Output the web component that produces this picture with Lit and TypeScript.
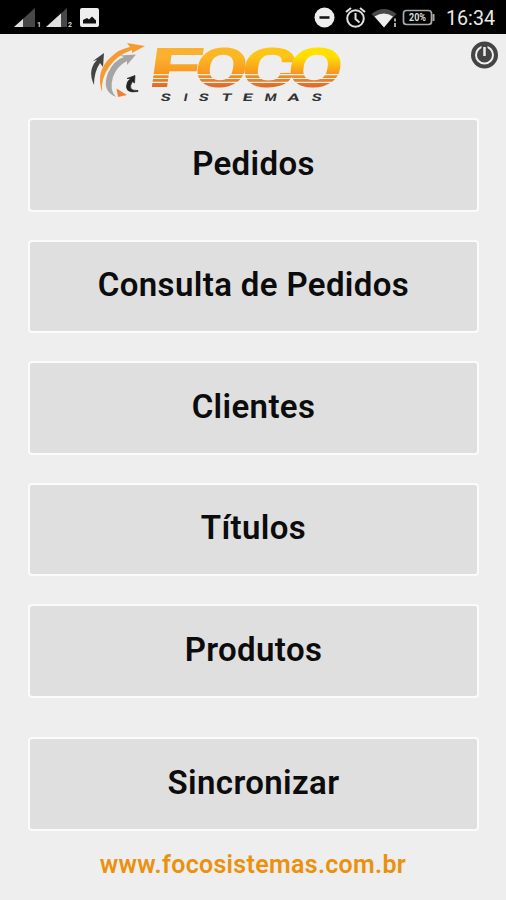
import { LitElement, html, css, svg } from "lit";
import { customElement, property } from "lit/decorators.js";

@customElement("status-bar")
class StatusBar extends LitElement {
  static styles = css`
    :host { display: block; background: #000; height: 34px; }
    svg { display: block; }
    .clock { font: 20px Roboto, sans-serif; fill: #e8e8e8; }
    .pct { font: bold 10px Roboto, sans-serif; fill: #ddd; }
    .sim { font: bold 7px Roboto, sans-serif; fill: #ddd; }
  `;
  render() {
    return html`<svg width="506" height="34" viewBox="0 0 506 34">
      <path d="M14 27L35 8V27Z" fill="#484848" /><path d="M14 27L23 19V27Z" fill="#e0e0e0" />
      <text class="sim" x="37" y="27">1</text>
      <path d="M46 27L67 8V27Z" fill="#484848" /><path d="M46 27L61 13.5V27Z" fill="#e0e0e0" />
      <text class="sim" x="68" y="27">2</text>
      <rect x="80" y="8" width="19" height="19" rx="2" fill="#eee" />
      <path d="M83 23.500V20l4-2 2 1.500 3-3 4 4v3z" fill="#111" />
      <circle cx="324.500" cy="17.500" r="10" fill="#eee" /><path d="M319.500 17.500h10" stroke="#111" stroke-width="2.500" />
      <g fill="none" stroke="#e0e0e0" stroke-width="2">
        <circle cx="355.500" cy="18.500" r="8.300" /><path d="M355.500 13v6l4 3.500M346 12l5-4M365 12l-5-4" />
        <rect x="403.500" y="10.500" width="28" height="14" rx="3" stroke="#aaa" stroke-width="1.700" />
      </g>
      <path d="M371.500 14Q384 4 396.500 14L384 27Z" fill="#484848" /><path d="M374.500 16.500Q384 10.500 393 16.500L384 27.500Z" fill="#eee" />
      <path d="M395 18.500v3M395 23v4" stroke="#bbb" stroke-width="1.800" />
      <path d="M433.500 14v7" stroke="#aaa" stroke-width="2" />
      <text class="pct" x="409" y="21.300" textLength="17" lengthAdjust="spacingAndGlyphs">20%</text>
      <text class="clock" x="446" y="25" textLength="49" lengthAdjust="spacingAndGlyphs">16:34</text>
    </svg>`;
  }
}

@customElement("brand-header")
class BrandHeader extends LitElement {
  static styles = css`
    :host { display: flex; height: 84px; }
    svg { display: block; }
    .word { font: 500 52px Roboto, sans-serif; }
    .sub { font: bold 10.500px Roboto, sans-serif; fill: #333; }
  `;
  render() {
    const letters = [
      { char: "F", x: 147, width: 52, top: "#fbb130" },
      { char: "O", x: 193, width: 52, top: "#fcb824" },
      { char: "C", x: 240, width: 53, top: "#fdc516" },
      { char: "O", x: 286, width: 54, top: "#ffe000" },
    ];
    const sub: [string, number, number][] = [
      ["S", 160, 10], ["I", 183, 4], ["S", 198, 10], ["T", 221, 10],
      ["E", 242, 10], ["M", 264, 12], ["A", 287, 12], ["S", 311, 10],
    ];
    return html`<svg width="506" height="84" viewBox="0 34 506 84">
      <defs>
        ${letters.map(({ top }, i) => svg`<linearGradient id="fill${i}" gradientUnits="userSpaceOnUse" x1="0" y1="-39" x2="0" y2="0">
          <stop offset="0" stop-color=${top} /><stop offset=".25" stop-color=${top} /><stop offset=".65" stop-color="#f9991f" /><stop offset="1" stop-color="#df6c2b" />
        </linearGradient>`)}
      </defs>
      <path d="M94 85Q87 70 97 60L93 61L104 53L103 67L100 63Q94 72 94 85Z" fill="#444" />
      <path d="M102 92Q95 71 111 57Q119 49 130 47L127 43L145 46L132 53V50Q117 55 109 67Q101 78 102 92Z" fill="#f79a32" />
      <path d="M116 97Q101 91 108 73Q114 60 124 57L120 55.500L136 54.500L127 65V61Q117 66 113 77Q109 90 116 97Z" fill="#a5a5a5" />
      <path d="M116.500 88.500L127 95L118 97Z" fill="#ee8035" />
      <path d="M138 91.500Q123 94 127.500 82Q128.500 80 131 78.500L127 78.500L135 75.500L134.500 83L132.500 81.500Q126.500 91 138 90.500Z" fill="#222" stroke="#222" stroke-width=".7" />
      ${letters.map(({ char, x, width }, i) => svg`<text class="word" fill="url(#fill${i})" stroke="url(#fill${i})" stroke-width="2"
        transform="translate(${x} 86) skewX(-8)" textLength=${width} lengthAdjust="spacingAndGlyphs">${char}</text>`)}
      <path d="M150 74.700h190M150 78.500h190M150 82.300h190" stroke="#eee" stroke-width="1.200" />
      ${sub.map(([char, x, width]) => svg`<text class="sub" transform="translate(${x} 100.500) skewX(-12)" textLength=${width} lengthAdjust="spacingAndGlyphs">${char}</text>`)}
      <circle cx="484.500" cy="55" r="13.500" fill="#444" />
      <circle cx="484.500" cy="55" r="8.500" fill="none" stroke="#eee" stroke-width="2" />
      <path d="M484.500 44v10" stroke="#444" stroke-width="6" />
      <path d="M484.500 47v9" fill="none" stroke="#eee" stroke-width="2.500" />
    </svg>`;
  }
}

@customElement("menu-button")
class MenuButton extends LitElement {
  @property() label = "";
  static styles = css`
    :host { display: block; }
    button {
      display: block; width: 451px; height: 93.500px; box-sizing: border-box; padding: 0 0 3px;
      border: 2px solid #fbfbfb; border-radius: 4px; background: #dfdfdf; color: #0c0c0c;
      font: 600 33px Roboto, sans-serif; letter-spacing: .37px;
    }
  `;
  render() { return html`<button>${this.label}</button>`; }
}

@customElement("app-root")
class AppRoot extends LitElement {
  static styles = css`
    :host { display: flex; flex-direction: column; height: 900px; background: #eee; }
    nav { display: flex; flex-direction: column; gap: 28px; padding-left: 28px; }
    .last { margin-top: 11.500px; }
    .site { margin-top: 18px; text-align: center; color: #ea910f; font: 600 25px/32px Roboto, sans-serif; letter-spacing: .3px; }
  `;
  render() {
    return html`<status-bar></status-bar><brand-header></brand-header>
      <nav>
        ${["Pedidos", "Consulta de Pedidos", "Clientes", "Títulos", "Produtos"].map((l) => html`<menu-button label=${l}></menu-button>`)}
        <menu-button class="last" label="Sincronizar"></menu-button>
      </nav>
      <div class="site">www.focosistemas.com.br</div>`;
  }
}
